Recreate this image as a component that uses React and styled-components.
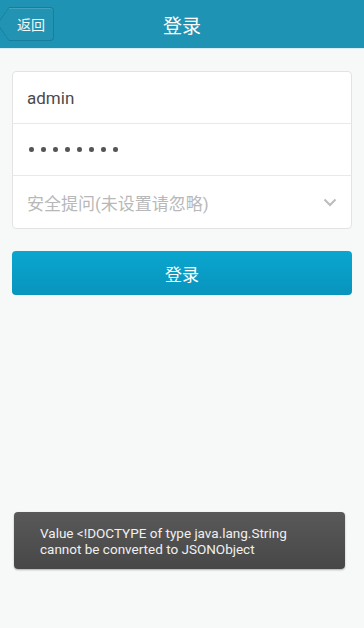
import React from "react";
import styled, { createGlobalStyle } from "styled-components";

const Global = createGlobalStyle`
  html, body {
    margin: 0;
    padding: 0;
    background: #f7f8f8;
  }
  body {
    font-family: Roboto, "Noto Sans CJK SC", "Noto Sans", sans-serif;
  }
`;

const Page = styled.div`
  width: 364px;
  height: 628px;
  display: flex;
  flex-direction: column;
  background: #f7f8f8;
  overflow: hidden;
`;

const Header = styled.div`
  height: 48px;
  display: grid;
  grid-template-columns: 80px 1fr 80px;
  align-items: center;
  background: #1f93b4;
  border-bottom: 1px solid #d9ecf1;
`;

const BackButton = styled.div`
  position: relative;
  margin-left: 9px;
  width: 44px;
  height: 32px;
  display: flex;
  align-items: center;
  justify-content: center;
  background: #2293b3;
  border: 1px solid #197e9c;
  border-left: none;
  border-radius: 0 4px 4px 0;
  color: #f2fafc;
  font-size: 14px;
  box-shadow: 0 1px 0 rgba(255, 255, 255, 0.15) inset;

  &::before {
    content: "";
    position: absolute;
    left: -12px;
    top: -1px;
    width: 0;
    height: 0;
    border-top: 17px solid transparent;
    border-bottom: 17px solid transparent;
    border-right: 12px solid #197e9c;
  }
  &::after {
    content: "";
    position: absolute;
    left: -11px;
    top: 0;
    width: 0;
    height: 0;
    border-top: 16px solid transparent;
    border-bottom: 16px solid transparent;
    border-right: 11px solid #2293b3;
  }
`;

const Title = styled.div`
  text-align: center;
  color: #ffffff;
  font-size: 19px;
`;

const Body = styled.div`
  flex: 1;
  display: flex;
  flex-direction: column;
  padding: 22px 12px 0;
`;

const Card = styled.div`
  background: #ffffff;
  border: 1px solid #e2e4e4;
  border-radius: 4px;
  display: flex;
  flex-direction: column;
`;

const Row = styled.div`
  height: 51px;
  display: flex;
  align-items: center;
  justify-content: space-between;
  padding: 0 14px 0 14px;
  color: ${(p) => (p.$muted ? "#b8b8b8" : "#4a4a4a")};
  font-size: 17px;
  & + & {
    border-top: 1px solid #e8eaea;
  }
  &:last-child {
    height: 52px;
  }
`;

const Dots = styled.span`
  display: flex;
  gap: 7.5px;
  padding-left: 2px;
`;

const Dot = styled.i`
  width: 4.5px;
  height: 4.5px;
  border-radius: 50%;
  background: #555555;
`;

const Button = styled.div`
  margin-top: 22px;
  height: 44px;
  border-radius: 4px;
  background: linear-gradient(#0aa6cf, #0894bd);
  color: #ffffff;
  font-size: 17px;
  display: flex;
  align-items: center;
  justify-content: center;
`;

const Toast = styled.div`
  margin: auto 19px 59px 14px;
  height: 57px;
  box-sizing: border-box;
  padding: 13px 26px 0;
  border-radius: 4px;
  background: linear-gradient(#595959, #474747);
  box-shadow: 0 1px 2px rgba(0, 0, 0, 0.3);
  color: #f0f0f0;
  font-family: Roboto, sans-serif;
  font-size: 13.5px;
  line-height: 16px;
`;

export default function App() {
  return (
    <Page>
      <Global />
      <Header>
        <BackButton>返回</BackButton>
        <Title>登录</Title>
        <div />
      </Header>
      <Body>
        <Card>
          <Row>admin</Row>
          <Row>
            <Dots>
              {Array.from({ length: 8 }).map((_, i) => (
                <Dot key={i} />
              ))}
            </Dots>
          </Row>
          <Row $muted>
            <span>安全提问(未设置请忽略)</span>
            <svg width="14" height="9" viewBox="0 0 14 9">
              <path d="M1.5 1.5 L7 7 L12.5 1.5" fill="none" stroke="#bcbcbc" strokeWidth="2" />
            </svg>
          </Row>
        </Card>
        <Button>登录</Button>
      </Body>
      <Toast>
        Value &lt;!DOCTYPE of type java.lang.String
        <br />
        cannot be converted to JSONObject
      </Toast>
    </Page>
  );
}
